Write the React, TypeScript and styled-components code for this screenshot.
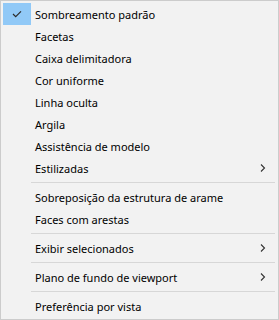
import { createGlobalStyle } from "styled-components";
import styled from "styled-components";

const GlobalStyle = createGlobalStyle`
  html, body {
    margin: 0;
    padding: 0;
    background: #ffffff;
  }
  body {
    font-family: "Noto Sans", "Open Sans", sans-serif;
  }
`;

const MenuBox = styled.div`
  width: 279px;
  height: 320px;
  box-sizing: border-box;
  background: #f2f2f2;
  border: 1px solid #cccccc;
  padding: 2px;
  display: flex;
  flex-direction: column;
`;

const Item = styled.div`
  height: 22px;
  display: flex;
  align-items: center;
  font-size: 11px;
  color: #000000;
`;

const CheckCell = styled.div<{ $checked?: boolean }>`
  width: 28px;
  height: 22px;
  margin-right: 4px;
  display: flex;
  align-items: center;
  justify-content: center;
  background: ${(p) => (p.$checked ? "#91c9f7" : "transparent")};
`;

const Label = styled.span`
  flex: 1;
  white-space: nowrap;
  padding-top: 1px;
`;

const ArrowCell = styled.div`
  width: 16px;
  display: flex;
  align-items: center;
  justify-content: flex-start;
`;

const Separator = styled.div`
  height: 7px;
  display: flex;
  align-items: center;
  padding-left: 28px;
  padding-right: 1px;
  &::after {
    content: "";
    display: block;
    flex: 1;
    height: 1px;
    background: #d7d7d7;
  }
`;

const Check = () => (
  <svg width="12" height="10" viewBox="0 0 12 10">
    <path d="M2 5 L4.7 7.7 L10 2.4" fill="none" stroke="#2b2b2b" strokeWidth="1.2" />
  </svg>
);

const Chevron = () => (
  <svg width="6" height="8" viewBox="0 0 6 8">
    <path d="M1 0.5 L4.5 4 L1 7.5" fill="none" stroke="#333" strokeWidth="1.1" />
  </svg>
);

type Entry = { label?: string; checked?: boolean; sub?: boolean; sep?: boolean };

const entries: Entry[] = [
  { label: "Sombreamento padrão", checked: true },
  { label: "Facetas" },
  { label: "Caixa delimitadora" },
  { label: "Cor uniforme" },
  { label: "Linha oculta" },
  { label: "Argila" },
  { label: "Assistência de modelo" },
  { label: "Estilizadas", sub: true },
  { sep: true },
  { label: "Sobreposição da estrutura de arame" },
  { label: "Faces com arestas" },
  { sep: true },
  { label: "Exibir selecionados", sub: true },
  { sep: true },
  { label: "Plano de fundo de viewport", sub: true },
  { sep: true },
  { label: "Preferência por vista" },
];

export default function App() {
  return (
    <>
      <GlobalStyle />
      <MenuBox>
        {entries.map((e, i) =>
          e.sep ? (
            <Separator key={i} />
          ) : (
            <Item key={i}>
              <CheckCell $checked={e.checked}>{e.checked && <Check />}</CheckCell>
              <Label>{e.label}</Label>
              <ArrowCell>{e.sub && <Chevron />}</ArrowCell>
            </Item>
          )
        )}
      </MenuBox>
    </>
  );
}
